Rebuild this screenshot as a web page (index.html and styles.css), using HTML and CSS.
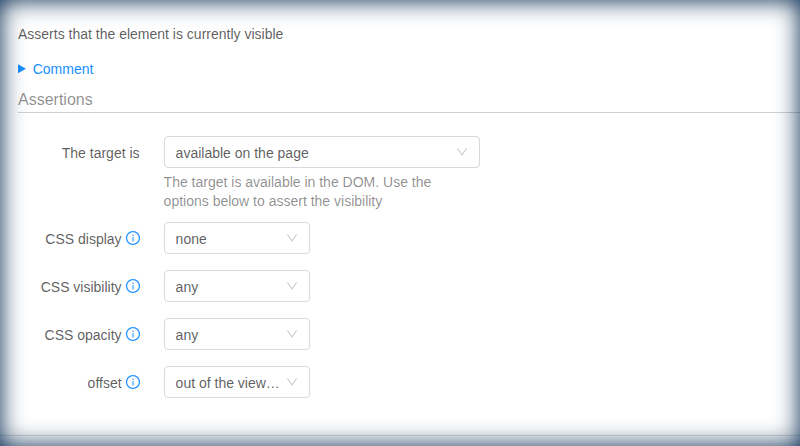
FILE: index.html
```html
<!DOCTYPE html>
<html lang="en">
<head>
<meta charset="utf-8">
<title>Assertions</title>
<link rel="stylesheet" href="styles.css">
</head>
<body>
<svg class="defs" aria-hidden="true">
  <symbol id="info" viewBox="64 64 896 896"><path d="M512 64C264.600 64 64 264.600 64 512s200.600 448 448 448 448-200.600 448-448S759.400 64 512 64zm0 820c-205.400 0-372-166.600-372-372s166.600-372 372-372 372 166.600 372 372-166.600 372-372 372z"/><path d="M464 336a48 48 0 1 0 96 0 48 48 0 1 0-96 0zm72 112h-48c-4.400 0-8 3.600-8 8v272c0 4.400 3.600 8 8 8h48c4.400 0 8-3.600 8-8V456c0-4.400-3.600-8-8-8z"/></symbol>
  <symbol id="down" viewBox="64 64 896 896"><path d="M884 256h-75c-5.100 0-9.900 2.500-12.900 6.600L512 654.200 227.900 262.600c-3-4.100-7.800-6.600-12.900-6.600h-75c-6.500 0-10.300 7.400-6.500 12.700l352.600 486.100c12.800 17.600 39 17.600 51.700 0l352.600-486.100c3.900-5.300.1-12.700-6.400-12.700z"/></symbol>
</svg>
<main class="panel">
  <p class="description">Asserts that the element is currently visible</p>
  <div class="comment"><svg class="marker" viewBox="0 0 8 10"><path d="M0 0.300 8 4.800 0 9.300z"/></svg><span>Comment</span></div>
  <h2 class="title">Assertions</h2>
  <form class="form">
    <div class="row row-target">
      <div class="label">The target is</div>
      <div>
        <div class="select wide"><span class="value">available on the page</span><svg class="arrow"><use href="#down"/></svg></div>
        <div class="help">The target is available in the DOM. Use the options below to assert the visibility</div>
      </div>
    </div>
    <div class="row">
      <div class="label">CSS display<svg class="info"><use href="#info"/></svg></div>
      <div class="select"><span class="value">none</span><svg class="arrow"><use href="#down"/></svg></div>
    </div>
    <div class="row">
      <div class="label">CSS visibility<svg class="info"><use href="#info"/></svg></div>
      <div class="select"><span class="value">any</span><svg class="arrow"><use href="#down"/></svg></div>
    </div>
    <div class="row">
      <div class="label">CSS opacity<svg class="info"><use href="#info"/></svg></div>
      <div class="select"><span class="value">any</span><svg class="arrow"><use href="#down"/></svg></div>
    </div>
    <div class="row">
      <div class="label">offset<svg class="info"><use href="#info"/></svg></div>
      <div class="select"><span class="value">out of the view…</span><svg class="arrow"><use href="#down"/></svg></div>
    </div>
  </form>
  <div class="divider"></div>
</main>
<div class="vignette"></div>
</body>
</html>
```
FILE: styles.css
```css
* { box-sizing: border-box; }
body {
  margin: 0;
  height: 446px;
  overflow: hidden;
  background: #fff;
  color: rgba(0, 0, 0, .65);
  font: 14px/21px "Liberation Sans", Arial, sans-serif;
}
.defs { position: absolute; width: 0; height: 0; }
.panel { padding-top: 24px; }
.description { margin: 0 0 14px 18px; }
.comment {
  display: flex;
  align-items: center;
  gap: 6.7px;
  margin-left: 18px;
  color: #1890ff;
}
.marker { width: 8px; height: 10px; margin-bottom: 1px; fill: currentColor; }
.title {
  margin: 7px 0 0 18px;
  height: 26px;
  border-bottom: 1px solid #d0d0d0;
  color: rgba(0, 0, 0, .45);
  font-size: 16px;
  font-weight: 400;
  line-height: 25px;
}
.form { padding-top: 23px; }
.row {
  display: grid;
  grid-template-columns: 139.6px 316px;
  column-gap: 24px;
  height: 48px;
}
.row-target { height: 86px; }
.label {
  display: flex;
  align-items: center;
  justify-content: flex-end;
  height: 34px;
}
.info { width: 14px; height: 14px; margin: -2px 0 0 4px; fill: #1890ff; }
.select {
  display: flex;
  align-items: center;
  justify-content: space-between;
  width: 146px;
  height: 32px;
  padding: 0 11px;
  border: 1px solid #d9d9d9;
  border-radius: 4px;
  background: #fff;
}
.wide { width: 316px; }
.value { padding-top: 2px; white-space: nowrap; }
.arrow { flex: none; width: 12px; height: 12px; fill: rgba(0, 0, 0, .22); }
.help {
  width: 300px;
  padding-top: 5px;
  color: rgba(0, 0, 0, .45);
  line-height: 19px;
}
.divider { height: 1px; margin-top: 21px; background: #dedede; }
.vignette {
  position: fixed;
  inset: 0;
  box-shadow: inset 0 0 25px #00264d;
  pointer-events: none;
}
```
